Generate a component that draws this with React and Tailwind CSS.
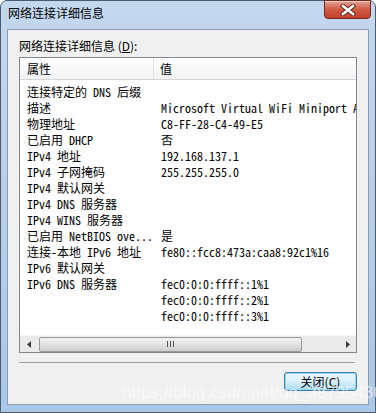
import React from 'react';

const listFont = {
  fontFamily: '"Noto Sans Mono CJK SC", "Liberation Mono", "Noto Sans CJK SC", monospace',
};
const uiFont = {
  fontFamily: '"Noto Sans CJK SC", "Liberation Sans", sans-serif',
};

const rows = [
  ['连接特定的 DNS 后缀', ''],
  ['描述', 'Microsoft Virtual WiFi Miniport Adapter'],
  ['物理地址', 'C8-FF-28-C4-49-E5'],
  ['已启用 DHCP', '否'],
  ['IPv4 地址', '192.168.137.1'],
  ['IPv4 子网掩码', '255.255.255.0'],
  ['IPv4 默认网关', ''],
  ['IPv4 DNS 服务器', ''],
  ['IPv4 WINS 服务器', ''],
  ['已启用 NetBIOS ove...', '是'],
  ['连接-本地 IPv6 地址', 'fe80::fcc8:473a:caa8:92c1%16'],
  ['IPv6 默认网关', ''],
  ['IPv6 DNS 服务器', 'fec0:0:0:ffff::1%1'],
  ['', 'fec0:0:0:ffff::2%1'],
  ['', 'fec0:0:0:ffff::3%1'],
];

const CloseIcon = () => (
  <svg width="16" height="12" viewBox="0 0 16 12">
    <path d="M3 2 L13 10 M13 2 L3 10" stroke="#5a2a24" strokeWidth="4.5" strokeLinecap="square" />
    <path d="M3 2 L13 10 M13 2 L3 10" stroke="#ffffff" strokeWidth="2.5" strokeLinecap="square" />
  </svg>
);

const Arrow = ({ dir }) => (
  <svg width="4" height="7" viewBox="0 0 4 7">
    {dir === 'left' ? <path d="M4 0 L0 3.5 L4 7 Z" fill="#3a3a3a" /> : <path d="M0 0 L4 3.5 L0 7 Z" fill="#3a3a3a" />}
  </svg>
);

export default function App() {
  return (
    <div className="w-[376px] h-[413px] relative overflow-hidden bg-white">
      <div className="w-[376px] h-[413px] flex flex-col rounded-t-[7px] border border-[#4c5a6c] bg-gradient-to-b from-[#c3d8ef] via-[#b7cfea] to-[#a9c7e9]">
        {/* title bar */}
        <div className="h-[28px] flex items-start justify-between shrink-0">
          <div className="pl-[7px] pt-[4px] text-[12px] leading-[16px] text-black" style={uiFont}>
            网络连接详细信息
          </div>
          <div className="mr-[4px] -mt-px w-[47px] h-[19px] flex items-center justify-center rounded-b-[4px] border border-[#6e2b22] bg-gradient-to-b from-[#e5a497] via-[#cf5a43] to-[#c8402c] shadow-[inset_0_1px_0_rgba(255,255,255,0.5)]">
            <CloseIcon />
          </div>
        </div>

        {/* client area */}
        <div className="mx-[6px] mb-[7px] flex-1 bg-[#f0f0f0] border border-[#8c9bb0] flex flex-col px-[11px] pt-[8px]">
          <div className="text-[12px] leading-[16px] text-black mb-[3px]" style={uiFont}>
            网络连接详细信息 (<span className="underline">D</span>):
          </div>

          <div className="h-[296px] border border-[#828790] bg-white flex flex-col overflow-hidden" style={listFont}>
            <div className="h-[22px] shrink-0 flex items-center bg-gradient-to-b from-white to-[#f1f2f4] border-b border-[#d5d5d5] text-[12px] text-black" style={uiFont}>
              <div className="w-[134px] h-full flex items-center pl-[7px] border-r border-[#e2e3e5]">属性</div>
              <div className="pl-[6px]">值</div>
            </div>
            <div className="pt-[4px] flex-1">
              {rows.map(([k, v], i) => (
                <div key={i} className="h-[16px] flex items-center text-[12px] leading-[16px] text-black whitespace-nowrap">
                  <div className="w-[140px] pl-[7px] shrink-0 overflow-hidden">{k}</div>
                  <div className="pl-[1px] overflow-hidden">{v}</div>
                </div>
              ))}
            </div>
            {/* horizontal scrollbar */}
            <div className="h-[17px] shrink-0 flex items-center bg-[#eaeaea] border-t border-[#f5f5f5]">
              <div className="w-[17px] h-full flex items-center justify-center">
                <Arrow dir="left" />
              </div>
              <div className="w-[263px] h-[15px] ml-[2px] rounded-[2px] border border-[#999999] bg-gradient-to-b from-[#f3f3f3] via-[#e2e2e2] to-[#cfcfcf] flex items-center justify-center gap-[2px]">
                <div className="w-px h-[6px] bg-[#555]" />
                <div className="w-px h-[6px] bg-[#555]" />
                <div className="w-px h-[6px] bg-[#555]" />
              </div>
              <div className="flex-1" />
              <div className="w-[17px] h-full flex items-center justify-center">
                <Arrow dir="right" />
              </div>
            </div>
          </div>

          <div className="mt-[9px] h-px bg-[#a0a0a0] mr-[2px]" />

          <div className="mt-[9px] flex justify-end">
            <div className="w-[73px] h-[19px] rounded-[3px] border border-[#3c7fb1] bg-gradient-to-b from-[#eaf6fd] via-[#d9f0fc] to-[#a7d9f5] shadow-[inset_0_0_0_1px_#97d6f5] flex items-center justify-center text-[12px] text-black" style={uiFont}>
              关闭(<span className="underline">C</span>)
            </div>
          </div>
        </div>
      </div>

      {/* watermark */}
      <div className="absolute left-[122px] top-[383px] text-[17px] leading-[20px] text-white/60 whitespace-nowrap pointer-events-none" style={{ fontFamily: '"Liberation Sans", sans-serif' }}>
        https://blog.csdn.net/qq_38795430
      </div>
    </div>
  );
}
